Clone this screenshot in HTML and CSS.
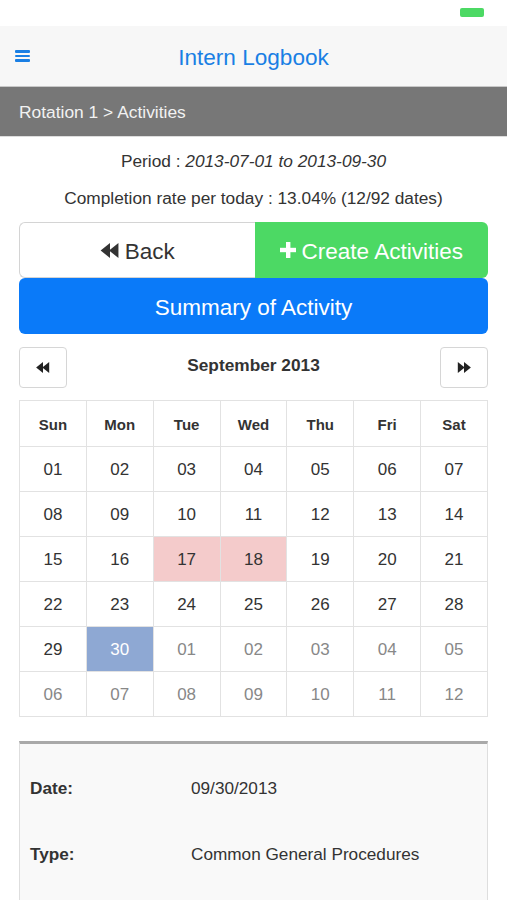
FILE: index.html
```html
<!DOCTYPE html>
<html>
<head>
<meta charset="utf-8">
<link rel="stylesheet" href="styles.css">
</head>
<body>
<div class="status"><span class="battery"></span></div>
<header class="navbar">
  <span class="menu"><i></i><i></i><i></i></span>
  <h1 class="title">Intern Logbook</h1>
</header>
<div class="crumb">Rotation 1 &gt; Activities</div>
<main class="content">
  <p class="period">Period : <em>2013-07-01 to 2013-09-30</em></p>
  <p class="rate">Completion rate per today : 13.04% (12/92 dates)</p>
  <div class="btn-row">
    <button class="btn btn-back"><svg class="ico-back" viewBox="0 0 20 16"><polygon points="0,8 10,0 10,16"/><polygon points="9,8 19,0 19,16"/></svg>Back</button>
    <button class="btn btn-create"><svg class="ico-plus" viewBox="0 0 16 16"><rect x="6" y="0" width="4.4" height="16"/><rect x="0" y="5.8" width="16" height="4.4"/></svg>Create Activities</button>
  </div>
  <button class="btn btn-summary">Summary of Activity</button>
  <div class="cal-head">
    <button class="cal-nav"><svg viewBox="0 0 20 16"><polygon points="0,8 10,0 10,16"/><polygon points="9,8 19,0 19,16"/></svg></button>
    <span class="month">September 2013</span>
    <button class="cal-nav"><svg viewBox="0 0 20 16"><polygon points="20,8 10,0 10,16"/><polygon points="11,8 1,0 1,16"/></svg></button>
  </div>
  <table class="cal">
    <thead>
      <tr><th>Sun</th><th>Mon</th><th>Tue</th><th>Wed</th><th>Thu</th><th>Fri</th><th>Sat</th></tr>
    </thead>
    <tbody>
      <tr><td>01</td><td>02</td><td>03</td><td>04</td><td>05</td><td>06</td><td>07</td></tr>
      <tr><td>08</td><td>09</td><td>10</td><td>11</td><td>12</td><td>13</td><td>14</td></tr>
      <tr><td>15</td><td>16</td><td class="done">17</td><td class="done">18</td><td>19</td><td>20</td><td>21</td></tr>
      <tr><td>22</td><td>23</td><td>24</td><td>25</td><td>26</td><td>27</td><td>28</td></tr>
      <tr><td>29</td><td class="sel">30</td><td class="other">01</td><td class="other">02</td><td class="other">03</td><td class="other">04</td><td class="other">05</td></tr>
      <tr><td class="other">06</td><td class="other">07</td><td class="other">08</td><td class="other">09</td><td class="other">10</td><td class="other">11</td><td class="other">12</td></tr>
    </tbody>
  </table>
  <section class="detail">
    <div class="drow"><span class="dlabel">Date:</span><span class="dval">09/30/2013</span></div>
    <div class="drow"><span class="dlabel">Type:</span><span class="dval">Common General Procedures</span></div>
    <div class="drow"></div>
  </section>
</main>
</body>
</html>
```
FILE: styles.css
```css
* { box-sizing: border-box; }
html, body { margin: 0; padding: 0; }
body {
  width: 507px;
  font-family: "Liberation Sans", Arial, sans-serif;
  color: #333;
  background: #fff;
  overflow: hidden;
}
.status {
  height: 26px;
  display: flex;
  justify-content: flex-end;
  align-items: flex-start;
  padding: 8px 23px 0 0;
}
.battery {
  width: 24px;
  height: 9px;
  background: #4cd964;
  border-radius: 2px;
}
.navbar {
  height: 61px;
  background: #f7f7f7;
  border-bottom: 1px solid #c8c8c8;
  display: flex;
  align-items: center;
  justify-content: center;
  position: relative;
}
.menu {
  position: absolute;
  left: 15px;
  top: 24px;
  width: 15px;
  display: flex;
  flex-direction: column;
  gap: 2px;
}
.menu i {
  display: block;
  height: 2.6px;
  background: #1a7fe4;
  border-radius: 1px;
}
.title {
  margin: 0;
  padding-top: 3px;
  font-size: 22.6px;
  font-weight: normal;
  color: #1a7fe4;
}
.crumb {
  height: 50px;
  background: #777;
  color: #f2f2f2;
  font-size: 17.4px;
  padding: 2px 0 0 19px;
  display: flex;
  align-items: center;
  border-bottom: 1px solid #ddd;
}
.content {
  padding: 0 19px;
}
.period, .rate {
  margin: 0;
  text-align: center;
  font-size: 17.3px;
  line-height: 24px;
}
.period { margin-top: 12px; }
.rate { margin-top: 13px; }
.btn {
  border: none;
  font-family: inherit;
  font-size: 22.5px;
  display: flex;
  align-items: center;
  justify-content: center;
  padding: 3px 0 0;
  cursor: pointer;
}
.btn-row {
  margin-top: 12px;
  display: flex;
  height: 56px;
}
.btn-back {
  flex: 235 0 0;
  background: #fff;
  color: #333;
  border: 1px solid #d4d4d4;
  border-right: none;
  border-radius: 6px 0 0 6px;
}
.ico-back {
  width: 20px;
  height: 15px;
  fill: #333;
  margin: -3px 5px 0 0;
}
.btn-create {
  flex: 234 0 0;
  background: #4cd964;
  color: #fff;
  border-radius: 0 6px 6px 0;
}
.ico-plus {
  width: 16px;
  height: 16px;
  fill: #fff;
  margin: -3px 6px 0 0;
}
.btn-summary {
  width: 100%;
  height: 56px;
  background: #0a7af9;
  color: #fff;
  border-radius: 6px;
}
.cal-head {
  margin-top: 13px;
  height: 41px;
  display: flex;
  align-items: center;
  justify-content: space-between;
}
.cal-nav {
  width: 48px;
  height: 41px;
  background: #fff;
  border: 1px solid #d6d6d6;
  border-radius: 4px;
  display: flex;
  align-items: center;
  justify-content: center;
  padding: 0;
}
.cal-nav svg {
  width: 14px;
  height: 11px;
  fill: #222;
}
.month {
  font-weight: bold;
  font-size: 17.3px;
  margin-top: -4px;
}
.cal {
  margin-top: 12px;
  width: 469px;
  border-collapse: collapse;
  table-layout: fixed;
  border: 1px solid #ddd;
}
.cal th, .cal td {
  border: 1px solid #e2e2e2;
  text-align: center;
  padding: 2px 0 0;
}
.cal th {
  height: 46px;
  font-size: 15px;
  font-weight: bold;
  color: #333;
}
.cal td {
  height: 45px;
  font-size: 17px;
  color: #333;
}
.cal td.other { color: #888; }
.cal td.done { background: #f4cbcb; }
.cal td.sel { background: #8ea8d3; color: #fff; }
.detail {
  margin-top: 24px;
  background: #f9f9f9;
  border: 1px solid #dedede;
  border-top: 3px solid #a9a9a9;
  padding: 11px 0 0 10px;
}
.drow {
  height: 66px;
  display: flex;
  align-items: center;
  font-size: 17.2px;
}
.dlabel {
  width: 161px;
  font-weight: bold;
}
```
